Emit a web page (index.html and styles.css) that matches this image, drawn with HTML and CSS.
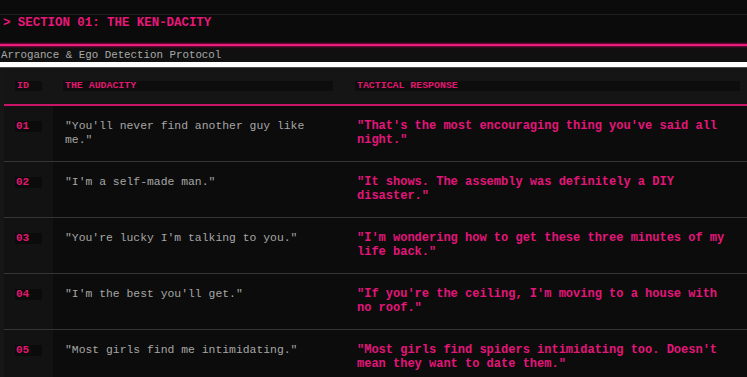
FILE: index.html
```html
<!DOCTYPE html>
<html>
<head>
<meta charset="utf-8">
<link rel="stylesheet" href="styles.css">
</head>
<body>
<div class="top-strip"></div>
<header class="section-head">
  <h1 class="section-title">&gt; SECTION 01: THE KEN-DACITY</h1>
</header>
<div class="pink-rule"></div>
<p class="subtitle">Arrogance &amp; Ego Detection Protocol</p>
<div class="table-wrap">
  <table class="ken-table">
    <colgroup>
      <col class="c-id">
      <col class="c-aud">
      <col class="c-resp">
    </colgroup>
    <thead>
      <tr>
        <th class="th-id"><span>ID</span></th>
        <th class="th-aud"><span>THE AUDACITY</span></th>
        <th class="th-resp"><span>TACTICAL RESPONSE</span></th>
      </tr>
    </thead>
    <tbody>
      <tr>
        <td class="td-id"><span>01</span></td>
        <td class="td-aud">"You'll never find another guy like me."</td>
        <td class="td-resp">"That's the most encouraging thing you've said all night."</td>
      </tr>
      <tr>
        <td class="td-id"><span>02</span></td>
        <td class="td-aud">"I'm a self-made man."</td>
        <td class="td-resp">"It shows. The assembly was definitely a DIY disaster."</td>
      </tr>
      <tr>
        <td class="td-id"><span>03</span></td>
        <td class="td-aud">"You're lucky I'm talking to you."</td>
        <td class="td-resp">"I'm wondering how to get these three minutes of my life back."</td>
      </tr>
      <tr>
        <td class="td-id"><span>04</span></td>
        <td class="td-aud">"I'm the best you'll get."</td>
        <td class="td-resp">"If you're the ceiling, I'm moving to a house with no roof."</td>
      </tr>
      <tr>
        <td class="td-id"><span>05</span></td>
        <td class="td-aud">"Most girls find me intimidating."</td>
        <td class="td-resp">"Most girls find spiders intimidating too. Doesn't mean they want to date them."</td>
      </tr>
    </tbody>
  </table>
</div>
</body>
</html>
```
FILE: styles.css
```css
html, body {
  margin: 0;
  padding: 0;
  background: #ffffff;
  overflow: hidden;
  font-family: "Liberation Mono", "DejaVu Sans Mono", monospace;
}

.top-strip {
  height: 14px;
  background: #0b0b0b;
  border-bottom: 1px solid #1f1f1f;
}

.section-head {
  background: #0b0b0b;
  height: 29px;
}

.section-title {
  margin: 0;
  padding: 1px 0 0 3px;
  font-size: 12.4px;
  line-height: 14px;
  font-weight: bold;
  color: #e8187a;
  white-space: nowrap;
}

.pink-rule {
  height: 2px;
  background: #ec1c7c;
  box-shadow: 0 0 2px 1px rgba(160, 10, 80, 0.75);
  position: relative;
  z-index: 1;
}

.subtitle {
  margin: 0;
  height: 16px;
  background: #101010;
  color: #a9a9a9;
  font-size: 10.8px;
  line-height: 19px;
  padding-left: 1px;
  white-space: nowrap;
  overflow: hidden;
}

.table-wrap {
  margin-top: 5px;
  border-top: 1px solid #4a4a4a;
  background: #161616;
  padding-left: 4px;
  width: 752px;
}

.ken-table {
  width: 748px;
  table-layout: fixed;
  border-collapse: collapse;
  background: #0c0c0c;
}

.c-id { width: 49px; }
.c-aud { width: 292px; }
.c-resp { width: 407px; }

.ken-table thead tr {
  background: #151515;
  border-bottom: 2px solid #c8156a;
}

.ken-table th {
  height: 36px;
  padding: 0 12px 0 10px;
  text-align: left;
  vertical-align: middle;
}

.ken-table th.th-id {
  padding: 0 11px 0 11px;
}

.ken-table th span {
  display: block;
  background: #0d0d0d;
  color: #e0186f;
  font-size: 9.9px;
  font-weight: bold;
  line-height: 10px;
  padding-left: 2px;
  white-space: nowrap;
  overflow: hidden;
}

.ken-table td {
  padding: 14px 12px 14px 12px;
  vertical-align: top;
  line-height: 13.5px;
  border-bottom: 1px solid #353535;
}

.td-id {
  background: #121212;
}

.ken-table td.td-id {
  padding: 14px 11px;
}

.td-id span {
  display: block;
  margin-top: 1px;
  height: 11px;
  line-height: 11px;
  background: #0b0b0b;
  color: #e0186f;
  font-size: 11px;
  font-weight: bold;
  padding-left: 1px;
}

.td-aud {
  color: #a6a6a6;
  font-size: 11.4px;
}

.ken-table td.td-resp {
  color: #e3167a;
  font-size: 12px;
  font-weight: bold;
  padding-right: 22px;
}
```
